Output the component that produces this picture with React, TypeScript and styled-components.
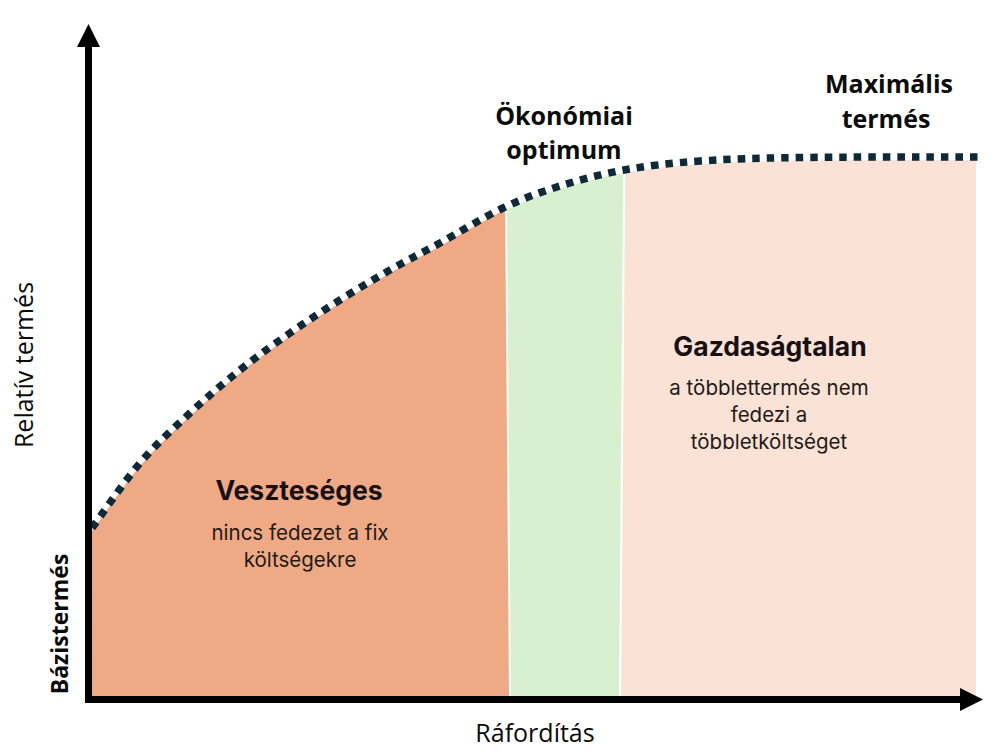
import React from "react";
import styled, { createGlobalStyle } from "styled-components";

const GlobalStyle = createGlobalStyle`
  html, body {
    margin: 0;
    padding: 0;
    background: #ffffff;
  }
`;

const Canvas = styled.div`
  width: 1000px;
  height: 755px;
  background: #ffffff;
  overflow: hidden;
`;

const ChartSvg = styled.svg`
  display: block;
  width: 1000px;
  height: 755px;
`;

const PeakLabel = styled.text`
  font-family: "Open Sans", "Liberation Sans", sans-serif;
  font-weight: 700;
  font-size: 25px;
  fill: #0b0b0b;
`;

const ZoneTitle = styled.text`
  font-family: Inter, "Noto Sans", sans-serif;
  font-weight: 700;
  font-size: 26.5px;
  fill: #161010;
`;

const ZoneNote = styled.text`
  font-family: Inter, "Noto Sans", sans-serif;
  font-weight: 400;
  font-size: 20.5px;
  fill: #221a17;
`;

const AxisTitle = styled.text<{ $bold?: boolean }>`
  font-family: "Open Sans", "Liberation Sans", sans-serif;
  font-weight: ${(p) => (p.$bold ? 700 : 400)};
  font-size: ${(p) => (p.$bold ? "23px" : "25px")};
  fill: #0b0b0b;
`;

type Pt = [number, number];

// dot centres of the yield curve, read off the picture
const curve: Pt[] = [
  [92, 528],
  [140, 463],
  [190, 413],
  [240, 370],
  [290, 333],
  [340, 300],
  [390, 270],
  [440, 243],
  [503, 208],
  [560, 186],
  [624, 170],
  [700, 161],
  [800, 157.5],
  [981, 157],
];

function smoothPath(pts: Pt[], dy = 0) {
  let d = `M ${pts[0][0]} ${pts[0][1] + dy}`;
  for (let i = 0; i < pts.length - 1; i++) {
    const p0 = pts[i - 1] || pts[i];
    const p1 = pts[i];
    const p2 = pts[i + 1];
    const p3 = pts[i + 2] || p2;
    const c1x = p1[0] + (p2[0] - p0[0]) / 6;
    const c1y = p1[1] + (p2[1] - p0[1]) / 6 + dy;
    const c2x = p2[0] - (p3[0] - p1[0]) / 6;
    const c2y = p2[1] - (p3[1] - p1[1]) / 6 + dy;
    d += ` C ${c1x} ${c1y} ${c2x} ${c2y} ${p2[0]} ${p2[1] + dy}`;
  }
  return d;
}

const BASE_Y = 696;

function App() {
  const line = smoothPath(curve);
  const area = `${smoothPath(curve, 3)} L 981 ${BASE_Y} L 92 ${BASE_Y} Z`;

  return (
    <Canvas>
      <GlobalStyle />
      <ChartSvg viewBox="0 0 1000 755">
        <defs>
          <clipPath id="under-curve">
            <path d={area} />
          </clipPath>
        </defs>

        <g clipPath="url(#under-curve)">
          <polygon points={`92,140 504.5,140 509,${BASE_Y} 92,${BASE_Y}`} fill="#f0a985" />
          <polygon points={`506.5,140 511,${BASE_Y} 619,${BASE_Y} 623.5,140`} fill="#d8f0cf" />
          <polygon points={`625.5,140 621,${BASE_Y} 976,${BASE_Y} 976,140`} fill="#fbe2d6" />
        </g>

        <path
          d={line}
          fill="none"
          stroke="#0e2a38"
          strokeWidth={7.5}
          strokeDasharray="7.5 7"
        />

        {/* axes */}
        <rect x={85} y={44} width={7} height={659} fill="#000" />
        <polygon points="88.5,24 77,47 100,47" fill="#000" />
        <rect x={85} y={696} width={878} height={7} fill="#000" />
        <polygon points="983,699.5 960,688 960,711" fill="#000" />

        <PeakLabel x={564} y={125} textAnchor="middle">Ökonómiai</PeakLabel>
        <PeakLabel x={564} y={159} textAnchor="middle">optimum</PeakLabel>
        <PeakLabel x={889} y={93} textAnchor="middle">Maximális</PeakLabel>
        <PeakLabel x={886} y={128} textAnchor="middle">termés</PeakLabel>

        <ZoneTitle x={299} y={500} textAnchor="middle">Veszteséges</ZoneTitle>
        <ZoneNote x={300} y={540} textAnchor="middle">nincs fedezet a fix</ZoneNote>
        <ZoneNote x={300} y={567} textAnchor="middle">költségekre</ZoneNote>

        <ZoneTitle x={770} y={356} textAnchor="middle">Gazdaságtalan</ZoneTitle>
        <ZoneNote x={769} y={395} textAnchor="middle">a többlettermés nem</ZoneNote>
        <ZoneNote x={769} y={422} textAnchor="middle">fedezi a</ZoneNote>
        <ZoneNote x={769} y={449} textAnchor="middle">többletköltséget</ZoneNote>

        <AxisTitle x={535} y={742} textAnchor="middle">Ráfordítás</AxisTitle>
        <AxisTitle x={33} y={365} textAnchor="middle" transform="rotate(-90 33 365)">
          Relatív termés
        </AxisTitle>
        <AxisTitle $bold x={68} y={624} textAnchor="middle" transform="rotate(-90 68 624)">
          Bázistermés
        </AxisTitle>
      </ChartSvg>
    </Canvas>
  );
}

export default App;
